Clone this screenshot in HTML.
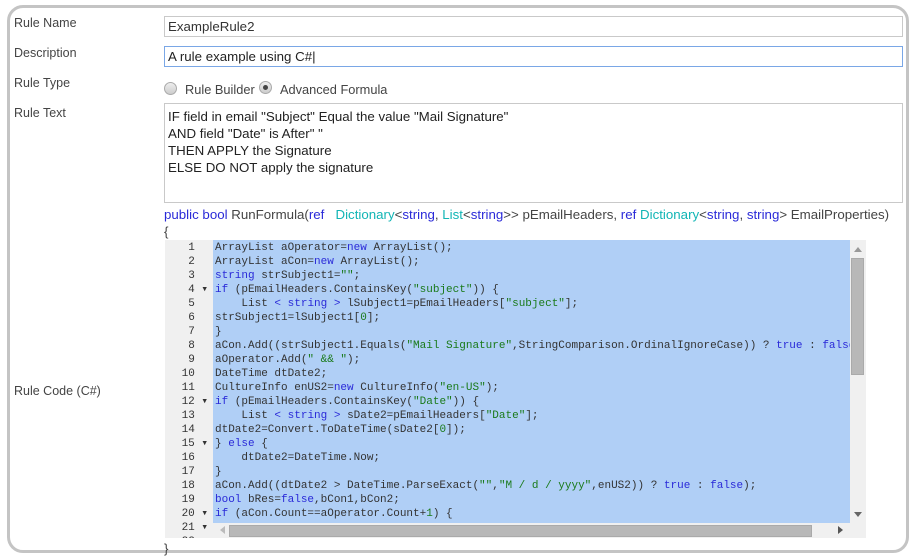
<!DOCTYPE html>
<html><head><meta charset="utf-8"><style>
body{margin:0;width:912px;height:558px;background:#fff;overflow:hidden;font-family:"Liberation Sans",sans-serif;font-size:12.5px;color:#444;position:relative}
.frame{position:absolute;left:7px;top:5px;width:896px;height:542px;border:3px solid #c4c4c4;border-radius:16px;}
.a{position:absolute;white-space:pre}
.c{font-size:13.3px}
.inp{position:absolute;left:164px;width:739px;height:21px;border:1px solid #c9c9c9;box-sizing:border-box;padding-left:3px;line-height:20px;color:#333;font-size:13.3px}
.mono{font-family:"Liberation Mono",monospace;font-size:11px}
.kw{color:#2a2ad8}.st{color:#1a7a1a}.ty{color:#11b5b5}
.code div{height:14px;line-height:14px;white-space:pre;color:#333}
.gut div{height:14px;line-height:14px;text-align:right;color:#333;white-space:pre}
.radio{position:absolute;width:11px;height:11px;border:1px solid #aaa;border-radius:50%;background:linear-gradient(#eee,#ccc)}
</style></head><body>
<div class="frame"></div>
<div class="a" style="left:14px;top:16px">Rule Name</div>
<div class="a" style="left:14px;top:46px">Description</div>
<div class="a" style="left:14px;top:76px">Rule Type</div>
<div class="a" style="left:14px;top:106px">Rule Text</div>
<div class="a" style="left:14px;top:384px">Rule Code (C#)</div>
<div class="inp" style="top:16px">ExampleRule2</div>
<div class="inp" style="top:46px;border:1px solid #7aa7e6;color:#222">A rule example using C#|</div>
<div class="radio" style="left:164px;top:82px"></div>
<div class="a" style="left:185px;top:82px;font-size:12.8px">Rule Builder</div>
<div class="radio" style="left:259px;top:81px"><div style="position:absolute;left:3px;top:3px;width:5px;height:5px;border-radius:50%;background:#444"></div></div>
<div class="a" style="left:280px;top:82px;font-size:12.8px">Advanced Formula</div>
<div style="position:absolute;left:164px;top:103px;width:739px;height:100px;border:1px solid #c9c9c9;box-sizing:border-box;padding:4px 3px;line-height:17px;color:#222;white-space:pre;font-size:13.3px">IF field in email "Subject" Equal the value "Mail Signature"
AND field "Date" is After" "
THEN APPLY the Signature
ELSE DO NOT apply the signature</div>
<div class="a c" style="left:164px;top:207px"><span class="kw">public bool</span> RunFormula(<span class="kw">ref</span>   <span class="ty">Dictionary</span>&lt;<span class="kw">string</span>, <span class="ty">List</span>&lt;<span class="kw">string</span>&gt;&gt; pEmailHeaders, <span class="kw">ref</span> <span class="ty">Dictionary</span>&lt;<span class="kw">string</span>, <span class="kw">string</span>&gt; EmailProperties)</div>
<div class="a c" style="left:164px;top:224px">{</div>
<div class="a c" style="left:164px;top:541px">}</div>
<div style="position:absolute;left:165px;top:240px;width:701px;height:298px;background:#f0f0f0;overflow:hidden">
 <div class="gut mono" style="position:absolute;left:0;top:1px;width:43px">
<div>1  </div><div>2  </div><div>3  </div><div>4 ▾</div><div>5  </div><div>6  </div><div>7  </div><div>8  </div><div>9  </div><div>10  </div><div>11  </div><div>12 ▾</div><div>13  </div><div>14  </div><div>15 ▾</div><div>16  </div><div>17  </div><div>18  </div><div>19  </div><div>20 ▾</div><div>21 ▾</div><div>22  </div>
 </div>
 <div class="code mono" style="position:absolute;left:48px;top:0;width:637px;height:283px;background:#b0cff6;overflow:hidden;padding-top:1px;box-sizing:border-box;padding-left:2px">
<div>ArrayList aOperator=<span class="kw">new</span> ArrayList();</div>
<div>ArrayList aCon=<span class="kw">new</span> ArrayList();</div>
<div><span class="kw">string</span> strSubject1=<span class="st">""</span>;</div>
<div><span class="kw">if</span> (pEmailHeaders.ContainsKey(<span class="st">"subject"</span>)) {</div>
<div>    List <span class="kw">&lt;</span> <span class="kw">string</span> <span class="kw">&gt;</span> lSubject1=pEmailHeaders[<span class="st">"subject"</span>];</div>
<div>strSubject1=lSubject1[<span class="st">0</span>];</div>
<div>}</div>
<div>aCon.Add((strSubject1.Equals(<span class="st">"Mail Signature"</span>,StringComparison.OrdinalIgnoreCase)) ? <span class="kw">true</span> : <span class="kw">false</span>);</div>
<div>aOperator.Add(<span class="st">" &amp;&amp; "</span>);</div>
<div>DateTime dtDate2;</div>
<div>CultureInfo enUS2=<span class="kw">new</span> CultureInfo(<span class="st">"en-US"</span>);</div>
<div><span class="kw">if</span> (pEmailHeaders.ContainsKey(<span class="st">"Date"</span>)) {</div>
<div>    List <span class="kw">&lt;</span> <span class="kw">string</span> <span class="kw">&gt;</span> sDate2=pEmailHeaders[<span class="st">"Date"</span>];</div>
<div>dtDate2=Convert.ToDateTime(sDate2[<span class="st">0</span>]);</div>
<div>} <span class="kw">else</span> {</div>
<div>    dtDate2=DateTime.Now;</div>
<div>}</div>
<div>aCon.Add((dtDate2 &gt; DateTime.ParseExact(<span class="st">""</span>,<span class="st">"M / d / yyyy"</span>,enUS2)) ? <span class="kw">true</span> : <span class="kw">false</span>);</div>
<div><span class="kw">bool</span> bRes=<span class="kw">false</span>,bCon1,bCon2;</div>
<div><span class="kw">if</span> (aCon.Count==aOperator.Count+<span class="st">1</span>) {</div>
<div>    </div>
 </div>
 <div style="position:absolute;left:685px;top:0;width:16px;height:283px;background:#f0f0f0">
  <div style="position:absolute;left:4px;top:7px;width:0;height:0;border:4px solid transparent;border-bottom:5px solid #999;border-top:0"></div>
  <div style="position:absolute;left:1px;top:18px;width:13px;height:117px;background:#b8b8b8;border:1px solid #aaa;box-sizing:border-box"></div>
  <div style="position:absolute;left:4px;top:272px;width:0;height:0;border:4px solid transparent;border-top:5px solid #666;border-bottom:0"></div>
 </div>
 <div style="position:absolute;left:48px;top:283px;width:637px;height:15px;background:#f0f0f0">
  <div style="position:absolute;left:7px;top:3px;border:4px solid transparent;border-right:5px solid #bbb;border-left:0"></div>
  <div style="position:absolute;left:16px;top:2px;width:583px;height:12px;background:#b8b8b8;border:1px solid #aaa;box-sizing:border-box"></div>
  <div style="position:absolute;left:625px;top:3px;border:4px solid transparent;border-left:5px solid #555;border-right:0"></div>
 </div>
</div>
</body></html>
